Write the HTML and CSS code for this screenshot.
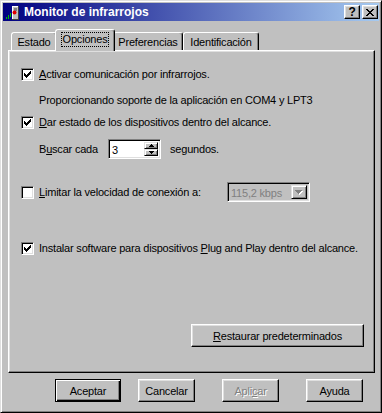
FILE: index.html
```html
<!DOCTYPE html>
<html lang="es">
<head>
  <meta charset="UTF-8" />
  <title>Monitor de infrarrojos</title>
  <link rel="stylesheet" href="styles.css">
</head>
<body>
  <div class="window">
    <div class="titlebar">
      <svg class="app-icon" width="16" height="16" viewBox="0 0 16 16">
        <path d="M8 2h6v13h-6z" fill="#c0c0c0" />
        <path d="M8 2h6v1h-6zM8 2h1v13h-1z" fill="#fff" />
        <path d="M14 2h1v13h-1zM8 15h7v1h-7z" fill="#404040" />
        <path d="M10 4h3v3h-3z" fill="#808080" />
        <circle cx="10.5" cy="8.5" r="2" fill="#e00000" />
        <path d="M2 13h1v2h-1zM4 11h1v4h-1zM6 9h1v4h-1z" fill="#00c000" />
      </svg>
      <span class="title">Monitor de infrarrojos</span>
      <div class="caption-buttons">
        <div class="cap-btn help">?</div>
        <div class="cap-btn">
          <svg width="8" height="7" viewBox="0 0 8 7">
            <path d="M0 0h2v1h1v1h2v-1h1v-1h2v1h-1v1h-1v1h-1v1h1v1h1v1h1v1h-2v-1h-1v-1h-2v1h-1v1h-2v-1h1v-1h1v-1h1v-1h-1v-1h-1v-1h-1z" fill="#000" />
          </svg>
        </div>
      </div>
    </div>

    <div class="tabs">
      <div class="tab tab-estado">Estado</div>
      <div class="tab tab-active"><span class="focus">Opciones</span></div>
      <div class="tab tab-pref">Preferencias</div>
      <div class="tab tab-ident">Identificación</div>
    </div>

    <div class="panel">
      <div class="row row-1">
        <span class="check on"><svg width="13" height="13" viewBox="0 0 13 13"><path d="M3 5H4V6H5V7H6V6H7V5H8V4H9V3H10V6H9V7H8V8H7V9H6V10H5V9H4V8H3Z" fill="#000" /></svg></span>
        <span class="label"><u>A</u>ctivar comunicación por infrarrojos.</span>
      </div>
      <div class="row row-2 indent">Proporcionando soporte de la aplicación en COM4 y LPT3</div>
      <div class="row row-3">
        <span class="check on"><svg width="13" height="13" viewBox="0 0 13 13"><path d="M3 5H4V6H5V7H6V6H7V5H8V4H9V3H10V6H9V7H8V8H7V9H6V10H5V9H4V8H3Z" fill="#000" /></svg></span>
        <span class="label"><u>D</u>ar estado de los dispositivos dentro del alcance.</span>
      </div>
      <div class="row row-4 indent">
        <span class="buscar">B<u>u</u>scar cada</span>
        <div class="spin">
          <span class="spin-value">3</span>
          <div class="spin-buttons">
            <div class="spin-btn"><svg width="5" height="3" viewBox="0 0 5 3"><path d="M2 0h1v1h1v1h1v1h-5v-1h1v-1h1z" fill="#000" /></svg></div>
            <div class="spin-btn"><svg width="5" height="3" viewBox="0 0 5 3"><path d="M0 0h5v1h-1v1h-1v1h-1v-1h-1v-1h-1z" fill="#000" /></svg></div>
          </div>
        </div>
        <span class="segundos">segundos.</span>
      </div>
      <div class="row row-5">
        <span class="check"></span>
        <span class="label label-limit"><u>L</u>imitar la velocidad de conexión a:</span>
        <div class="combo">
          <span class="combo-value">115,2 kbps</span>
          <div class="combo-btn">
            <svg width="8" height="5" viewBox="0 0 8 5">
              <path d="M1 1h7v1h-1v1h-1v1h-1v1h-1v-1h-1v-1h-1v-1h-1z" fill="#fff" />
              <path d="M0 0h7v1h-1v1h-1v1h-1v1h-1v-1h-1v-1h-1v-1h-1z" fill="#808080" />
            </svg>
          </div>
        </div>
      </div>
      <div class="row row-6">
        <span class="check on"><svg width="13" height="13" viewBox="0 0 13 13"><path d="M3 5H4V6H5V7H6V6H7V5H8V4H9V3H10V6H9V7H8V8H7V9H6V10H5V9H4V8H3Z" fill="#000" /></svg></span>
        <span class="label">Instalar software para dispositivos <u>P</u>lug and Play dentro del alcance.</span>
      </div>
      <div class="btn btn-restore"><span><u>R</u>estaurar predeterminados</span></div>
    </div>

    <div class="buttons">
      <div class="btn btn-default">Aceptar</div>
      <div class="btn">Cancelar</div>
      <div class="btn disabled">Apli<u>c</u>ar</div>
      <div class="btn">Ayuda</div>
    </div>
  </div>
</body>
</html>
```

FILE: styles.css
```css
body {
  margin: 0;
  background-color: #c0c0c0;
  font-family: "Liberation Sans", Arial, sans-serif;
  font-size: 11px;
  letter-spacing: -0.2px;
  color: #000;
}
u {
  text-decoration: underline;
  text-underline-offset: 1px;
}
.window {
  width: 382px;
  height: 413px;
  box-sizing: border-box;
  background-color: #c0c0c0;
  border: 1px solid;
  border-color: #dfdfdf #000 #000 #dfdfdf;
  box-shadow: inset 1px 1px #fff, inset -1px -1px #808080;
  padding: 2px;
  display: flex;
  flex-direction: column;
}
.titlebar {
  height: 18px;
  display: flex;
  align-items: center;
  padding: 0 1px 0 1px;
  background: linear-gradient(to right, #000080, #a6caf0);
  color: #fff;
}
.app-icon {
  margin-right: 4px;
}
.title {
  font-weight: bold;
  font-size: 12px;
  letter-spacing: 0;
}
.caption-buttons {
  margin-left: auto;
  display: flex;
  gap: 2px;
}
.cap-btn {
  width: 16px;
  height: 14px;
  box-sizing: border-box;
  background-color: #c0c0c0;
  border: 1px solid;
  border-color: #fff #000 #000 #fff;
  box-shadow: inset -1px -1px #808080, inset 1px 1px #dfdfdf;
  display: flex;
  align-items: center;
  justify-content: center;
  color: #000;
}
.cap-btn.help {
  font-weight: bold;
  font-size: 12px;
  line-height: 1;
}
.tabs {
  display: flex;
  align-items: flex-end;
  height: 21px;
  margin-top: 8px;
  padding-left: 8px;
  position: relative;
  z-index: 1;
}
.tab {
  height: 18px;
  box-sizing: border-box;
  border: 1px solid;
  border-bottom: none;
  border-color: #fff #000 transparent #fff;
  border-radius: 3px 3px 0 0;
  box-shadow: inset -1px 0 #808080;
  display: flex;
  align-items: center;
  justify-content: center;
  background-color: #c0c0c0;
}
.tab-estado {
  width: 46px;
}
.tab-pref {
  width: 70px;
}
.tab-ident {
  width: 76px;
}
.tab-active {
  width: 60px;
  height: 22px;
  margin: 0 -2px -1px;
  padding-bottom: 3px;
  position: relative;
  z-index: 2;
}
.focus {
  outline: 1px dotted #000;
  outline-offset: 0;
  padding: 0 1px;
  line-height: 13px;
}
.panel {
  height: 323px;
  margin: 0 4px 0 5px;
  box-sizing: border-box;
  border: 1px solid;
  border-color: #fff #000 #000 #fff;
  box-shadow: inset -1px -1px #808080, inset 1px 1px #dfdfdf;
  padding: 13px 10px 0 12px;
  display: flex;
  flex-direction: column;
}
.row {
  height: 20px;
  display: flex;
  align-items: center;
  white-space: nowrap;
}
.indent {
  padding-left: 18px;
}
.row-2 { margin-top: 6px; }
.row-3 { margin-top: 2px; }
.row-4 { margin-top: 7px; }
.row-5 { margin-top: 23px; }
.row-6 { margin-top: 36px; }
.check {
  width: 13px;
  height: 13px;
  box-sizing: border-box;
  flex-shrink: 0;
  background-color: #fff;
  border: 1px solid;
  border-color: #808080 #fff #fff #808080;
  box-shadow: inset 1px 1px #000, inset -1px -1px #dfdfdf;
  margin-right: 5px;
  position: relative;
}
.check svg {
  position: absolute;
  left: -1px;
  top: -1px;
}
.label-limit {
  width: 188px;
}
.buscar {
  width: 69px;
}
.spin {
  width: 53px;
  height: 20px;
  box-sizing: border-box;
  background-color: #fff;
  border: 1px solid;
  border-color: #808080 #fff #fff #808080;
  box-shadow: inset 1px 1px #000, inset -1px -1px #dfdfdf;
  display: flex;
  padding: 2px 2px 2px 3px;
}
.spin-value {
  flex: 1;
  line-height: 16px;
}
.spin-buttons {
  width: 14px;
  display: flex;
  flex-direction: column;
}
.spin-btn {
  flex: 1;
  box-sizing: border-box;
  background-color: #c0c0c0;
  border: 1px solid;
  border-color: #dfdfdf #000 #000 #dfdfdf;
  box-shadow: inset 1px 1px #fff, inset -1px -1px #808080;
  display: flex;
  align-items: center;
  justify-content: center;
}
.segundos {
  margin-left: 9px;
}
.combo {
  width: 83px;
  height: 20px;
  box-sizing: border-box;
  border: 1px solid;
  border-color: #808080 #fff #fff #808080;
  box-shadow: inset 1px 1px #000, inset -1px -1px #dfdfdf;
  display: flex;
  padding: 2px;
}
.combo-value {
  flex: 1;
  color: #808080;
  line-height: 16px;
  padding-left: 1px;
}
.combo-btn {
  width: 16px;
  box-sizing: border-box;
  background-color: #c0c0c0;
  border: 1px solid;
  border-color: #dfdfdf #000 #000 #dfdfdf;
  box-shadow: inset 1px 1px #fff, inset -1px -1px #808080;
  display: flex;
  align-items: center;
  justify-content: center;
}
.btn {
  height: 23px;
  width: 57px;
  box-sizing: border-box;
  background-color: #c0c0c0;
  border: 1px solid;
  border-color: #fff #000 #000 #fff;
  box-shadow: inset -1px -1px #808080, inset 1px 1px #dfdfdf;
  display: flex;
  align-items: center;
  justify-content: center;
  white-space: nowrap;
}
.btn-restore {
  width: 173px;
  align-self: flex-end;
  margin-top: 66px;
}
.buttons {
  display: flex;
  gap: 27px;
  margin-top: 6px;
  padding-left: 52px;
}
.btn-default {
  width: 66px;
  margin-right: -10px;
  border-color: #000;
  box-shadow: inset 1px 1px #fff, inset -1px -1px #000, inset -2px -2px #808080;
}
.btn.disabled {
  color: #808080;
  text-shadow: 1px 1px #fff;
}
```
